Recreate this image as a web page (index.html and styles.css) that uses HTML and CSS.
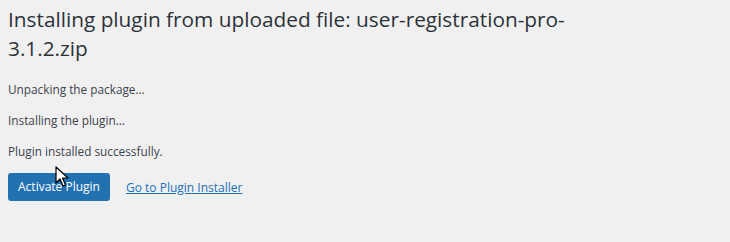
FILE: index.html
```html
<!DOCTYPE html>
<html lang="en">
<head>
    <meta charset="UTF-8">
    <title>Install Plugin</title>
    <link rel="stylesheet" href="styles.css">
</head>
<body>

<div class="wrap">
    <h1>Installing plugin from uploaded file: user-registration-pro-<br>3.1.2.zip</h1>

    <p>Unpacking the package&hellip;</p>
    <p>Installing the plugin&hellip;</p>
    <p>Plugin installed successfully.</p>

    <div class="actions">
        <a href="#" class="button">Activate Plugin</a>
        <a href="#" class="link">Go to Plugin Installer</a>
        <!-- mouse pointer over the button -->
        <svg class="cursor" width="14" height="22" viewBox="0 0 14 22">
            <path d="M1 1 L1 17 L5 13 L8 20 L10.5 19 L7.5 12 L13 12 Z" fill="#fff" stroke="#000" stroke-width="1.2" stroke-linejoin="round"/>
        </svg>
    </div>
</div>

</body>
</html>
```

FILE: styles.css
```css
* {
    margin: 0;
    padding: 0;
    box-sizing: border-box;
}

body {
    font-family: "Open Sans", "Noto Sans", sans-serif;
    background-color: #f0f0f1;
    color: #3c434a;
}

.wrap {
    padding: 5px 8px 0 8px;
}

h1 {
    font-size: 20.8px;
    font-weight: 400;
    line-height: 29px;
    color: #2c3338;
    margin-bottom: 17px;
}

p {
    font-size: 11.8px;
    line-height: 18px;
    margin-bottom: 13px;
}

.actions {
    position: relative;
    display: flex;
    align-items: center;
    gap: 16px;
    margin-top: 0;
}

.button {
    display: inline-block;
    width: 102px;
    text-align: center;
    background-color: #2271b1;
    color: #fff;
    text-decoration: none;
    font-size: 12px;
    line-height: 28px;
    border-radius: 3px;
}

.link {
    color: #2271b1;
    font-size: 12px;
}

.cursor {
    position: absolute;
    left: 47px;
    top: -7px;
}
```
